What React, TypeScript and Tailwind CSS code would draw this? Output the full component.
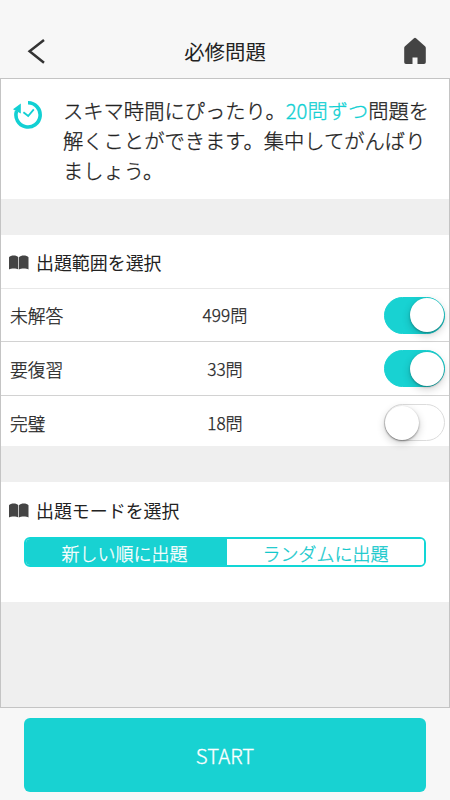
import { useState } from "react";

const ranges = [
  { id: "unanswered", label: "未解答", count: 499 },
  { id: "review", label: "要復習", count: 33 },
  { id: "perfect", label: "完璧", count: 18 },
];

const modes = ["新しい順に出題", "ランダムに出題"];

function BookIcon() {
  return (
    <svg width="20" height="15" viewBox="0 0 20 15" fill="#444">
      <path d="M0 2.2C1.5.2 7.5-.2 9.3 2.2V14.4C7.5 13.2 2 13.2 0 14.4Z" />
      <path d="M10 2.2C11.8-.2 17.8-.2 19.5 2.2V14.4C17.5 13.2 12 13.2 10 14.4Z" />
    </svg>
  );
}

function TimerIcon() {
  return (
    <svg className="mt-[5px] shrink-0" width="30" height="30" viewBox="0 0 30 30" fill="none">
      <path
        d="M15 2.8A12.1 12.1 0 1 1 3.6 11"
        stroke="#12d0d3"
        strokeWidth="3.6"
      />
      <path d="M0 9.2L7.8 3.6V13.4Z" fill="#12d0d3" />
      <path d="M10.4 12.2L15.2 16L20.8 9.4" stroke="#12d0d3" strokeWidth="1.8" />
    </svg>
  );
}

function SectionTitle({ children }: { children: string }) {
  return (
    <h2 className="flex items-center gap-[7px] pl-2 text-[17.95px] leading-[26px] text-[#222]">
      <BookIcon />
      {children}
    </h2>
  );
}

function Toggle({ on, onClick }: { on: boolean; onClick: () => void }) {
  return (
    <button
      onClick={onClick}
      className={`flex h-[37px] w-[61px] items-center rounded-full border ${
        on
          ? "justify-end border-[#18d2d2] bg-[#18d2d2]"
          : "border-[#dcdcdc] bg-white"
      }`}
    >
      <span
        className={`h-[34px] w-[34px] rounded-full bg-white ${
          on
            ? "shadow-[0_1px_2px_rgba(0,0,0,0.3),0_3px_8px_rgba(0,0,0,0.2)]"
            : "shadow-[0_1px_2px_rgba(0,0,0,0.4),0_3px_8px_rgba(0,0,0,0.2)]"
        }`}
      />
    </button>
  );
}

export default function App() {
  const [selected, setSelected] = useState(["unanswered", "review"]);
  const [mode, setMode] = useState(0);

  function toggleRange(id: string) {
    setSelected(
      selected.includes(id)
        ? selected.filter((s) => s !== id)
        : [...selected, id]
    );
  }

  return (
    <div className="flex h-[800px] w-[450px] flex-col overflow-hidden bg-[#f7f7f7] font-['Noto_Sans_CJK_JP',sans-serif] text-[#222]">
      <header className="flex h-[78px] shrink-0 items-center justify-between pt-[24px] pr-[23px] pl-[27px]">
        <button className="w-5">
          <svg width="19" height="26" viewBox="0 0 19 26" fill="none">
            <path d="M17 1.9L2.6 13.3L17 24.7" stroke="#333" strokeWidth="2.5" />
          </svg>
        </button>
        <h1 className="text-[20.4px] leading-[30px]">必修問題</h1>
        <button className="w-6">
          <svg width="24" height="28" viewBox="0 0 24 28" fill="#444">
            <path d="M11 1.2Q12 .3 13 1.2L22 9.2Q22.8 10 22.8 11V25.2Q22.8 27 21 27H14.5V20.5H9.5V27H3Q1.2 27 1.2 25.2V11Q1.2 10 2 9.2Z" />
          </svg>
        </button>
      </header>

      <main className="flex h-[630px] shrink-0 flex-col border border-[#c4c4c4] bg-[#efefef]">
        <section className="flex h-[120px] gap-[20px] bg-white pt-[16px] pl-[12px]">
          <TimerIcon />
          <p className="w-[380px] text-[20.3px] leading-[30px] font-light [-webkit-text-stroke:0.3px]">
            スキマ時間にぴったり。<span className="text-[#12d0d3]">20問ずつ</span>問題を
            <br />
            解くことができます。集中してがんばり
            <br />
            ましょう。
          </p>
        </section>

        <section className="mt-[36px] h-[211px] bg-white">
          <div className="h-[53px] pt-[14px]">
            <SectionTitle>出題範囲を選択</SectionTitle>
          </div>
          {ranges.map((r, i) => (
            <div
              key={r.id}
              className={`grid grid-cols-[1fr_120px_1fr] items-center border-t pr-1 pl-[9px] text-[17.8px] leading-[26px] font-light ${
                i === 0 ? "h-[53px] border-[#e8e8e8]" : "h-[54px] border-[#d2d2d2]"
              }`}
            >
              <span className="[-webkit-text-stroke:0.25px]">{r.label}</span>
              <span className="pr-[5px] text-center text-[17.2px] [-webkit-text-stroke:0.25px]">
                {r.count}問
              </span>
              <span className="flex justify-end">
                <Toggle
                  on={selected.includes(r.id)}
                  onClick={() => toggleRange(r.id)}
                />
              </span>
            </div>
          ))}
        </section>

        <section className="mt-[36px] h-[120px] bg-white pt-[15px]">
          <SectionTitle>出題モードを選択</SectionTitle>
          <div className="mx-[23px] mt-[14px] grid h-[30px] grid-cols-[201px_1fr] overflow-hidden rounded-md border-2 border-[#12d6d6]">
            {modes.map((m, i) => (
              <button
                key={m}
                onClick={() => setMode(i)}
                className={`pt-px text-center text-[18px] leading-[26px] font-light [-webkit-text-stroke:0.3px] ${
                  i === 0 ? "pr-1" : "pr-0"
                } ${
                  mode === i
                    ? "bg-[#18d2d2] text-white"
                    : "bg-white text-[#12c8cc]"
                }`}
              >
                {m}
              </button>
            ))}
          </div>
        </section>
      </main>

      <footer className="px-6 pt-[10px]">
        <button className="h-[74px] w-full rounded-md bg-[#18d2d2] text-[20.4px] leading-[30px] font-light text-white [-webkit-text-stroke:0.3px]">
          START
        </button>
      </footer>
    </div>
  );
}
